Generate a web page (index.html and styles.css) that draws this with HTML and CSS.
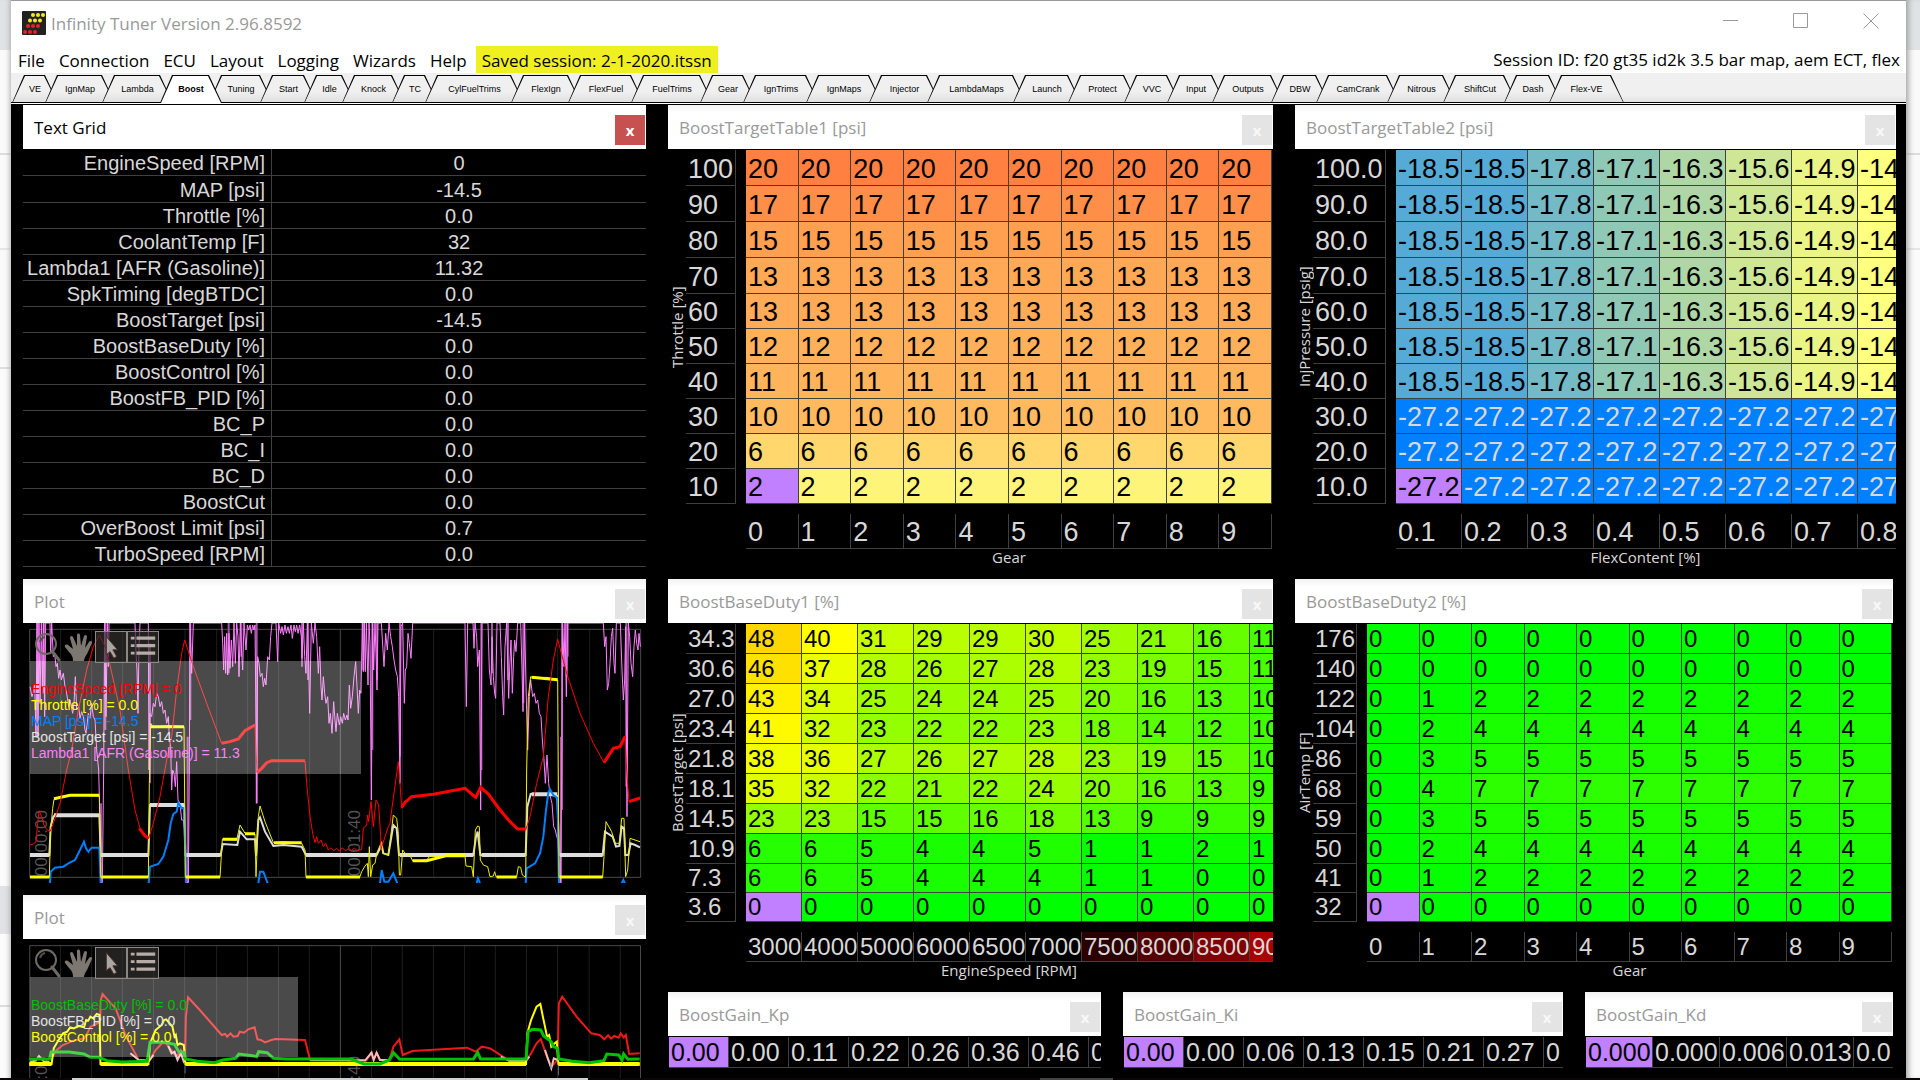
FILE: index.html
```html
<!DOCTYPE html>
<html lang="en">
<head>
<meta charset="utf-8">
<title>Infinity Tuner Version 2.96.8592</title>
<link rel="stylesheet" href="styles.css">
</head>
<body>
<svg class="symbols" aria-hidden="true">
  <symbol id="zoom" viewBox="0 0 32 32">
    <circle cx="15" cy="13" r="10" fill="none" stroke="#6f6a64" stroke-width="2"/>
    <path d="M9 11a7 7 0 0 1 5-5" fill="none" stroke="#55504b" stroke-width="2"/>
    <path d="M21 20l7 9" stroke="#6f6a64" stroke-width="3" stroke-linecap="round"/>
  </symbol>
  <symbol id="hand" viewBox="0 0 32 32">
    <path d="M10 30c0-4-1-6-4-9l-4-5c-1-2 1-3 3-2l5 4-3-11c0-2 2-3 3-1l4 9V4c0-2 3-2 3 0l1 11 3-10c1-2 3-1 3 1l-2 11 4-6c1-2 4-1 3 1l-5 11c-2 3-3 5-3 7z" fill="#7d7771"/>
  </symbol>
  <symbol id="arrow" viewBox="0 0 32 32">
    <path d="M11 5v19l4-3 4 7 3-2-4-7h5z" fill="#a9a6a6" stroke="#4a3020" stroke-width="1"/>
  </symbol>
  <symbol id="list" viewBox="0 0 32 32">
    <path d="M9 6.500h20M9 14.500h20M9 22.500h20" stroke="#b5aca5" stroke-width="3.500"/>
    <path d="M3 6.500h4M3 14.500h4M3 22.500h4" stroke="#b5aca5" stroke-width="3"/>
  </symbol>
</svg>

<div class="desktop">
  <div class="edge edge-left"></div>
  <div class="app">
    <header class="titlebar">
      <svg class="logo" viewBox="0 0 24 24" aria-hidden="true">
        <rect width="24" height="24" rx="1" fill="#222"/>
        <g fill="#f4ea1c"><circle cx="11" cy="4" r="2"/><circle cx="16" cy="4" r="2"/><circle cx="21" cy="4" r="2"/><circle cx="8" cy="9.500" r="2"/><circle cx="13" cy="9.500" r="2"/><circle cx="18" cy="9.500" r="2"/></g>
        <g fill="#e8202a"><circle cx="6" cy="15" r="2"/><circle cx="11" cy="15" r="2"/><circle cx="16" cy="15" r="2"/><circle cx="3" cy="21" r="2"/><circle cx="8" cy="21" r="2"/><circle cx="13" cy="21" r="2"/></g>
      </svg>
      <h1 class="app-name">Infinity Tuner Version 2.96.8592</h1>
      <div class="window-buttons">
        <button class="wb" aria-label="Minimize"><svg viewBox="0 0 16 16"><path d="M0 7.500h15"/></svg></button>
        <button class="wb" aria-label="Maximize"><svg viewBox="0 0 16 16"><path d="M.5.5h14v14H.5z"/></svg></button>
        <button class="wb" aria-label="Close"><svg viewBox="0 0 16 16"><path d="M.5.5l15 15M15.500.5l-15 15"/></svg></button>
      </div>
    </header>
    <nav class="menubar">
      <button class="menu">File</button>
      <button class="menu">Connection</button>
      <button class="menu">ECU</button>
      <button class="menu">Layout</button>
      <button class="menu">Logging</button>
      <button class="menu">Wizards</button>
      <button class="menu">Help</button>
      <span class="saved">Saved session: 2-1-2020.itssn</span>
      <span class="session">Session ID: f20 gt35 id2k 3.5 bar map, aem ECT, flex</span>
    </nav>
    <div class="tabs" role="tablist">
      <button class="tab" role="tab">VE</button>
      <button class="tab" role="tab">IgnMap</button>
      <button class="tab" role="tab">Lambda</button>
      <button class="tab active" role="tab" aria-selected="true">Boost</button>
      <button class="tab" role="tab">Tuning</button>
      <button class="tab" role="tab">Start</button>
      <button class="tab" role="tab">Idle</button>
      <button class="tab" role="tab">Knock</button>
      <button class="tab" role="tab">TC</button>
      <button class="tab" role="tab">CylFuelTrims</button>
      <button class="tab" role="tab">FlexIgn</button>
      <button class="tab" role="tab">FlexFuel</button>
      <button class="tab" role="tab">FuelTrims</button>
      <button class="tab" role="tab">Gear</button>
      <button class="tab" role="tab">IgnTrims</button>
      <button class="tab" role="tab">IgnMaps</button>
      <button class="tab" role="tab">Injector</button>
      <button class="tab" role="tab">LambdaMaps</button>
      <button class="tab" role="tab">Launch</button>
      <button class="tab" role="tab">Protect</button>
      <button class="tab" role="tab">VVC</button>
      <button class="tab" role="tab">Input</button>
      <button class="tab" role="tab">Outputs</button>
      <button class="tab" role="tab">DBW</button>
      <button class="tab" role="tab">CamCrank</button>
      <button class="tab" role="tab">Nitrous</button>
      <button class="tab" role="tab">ShiftCut</button>
      <button class="tab" role="tab">Dash</button>
      <button class="tab" role="tab">Flex-VE</button>
    </div>

    <main class="workspace">
      <div class="column">
        <section class="panel">
          <div class="panel-title current"><h2>Text Grid</h2><button class="close" aria-label="Close Text Grid">x</button></div>
          <table class="readout">
            <tr><th>EngineSpeed [RPM]</th><td>0</td></tr>
            <tr><th>MAP [psi]</th><td>-14.5</td></tr>
            <tr><th>Throttle [%]</th><td>0.0</td></tr>
            <tr><th>CoolantTemp [F]</th><td>32</td></tr>
            <tr><th>Lambda1 [AFR (Gasoline)]</th><td>11.32</td></tr>
            <tr><th>SpkTiming [degBTDC]</th><td>0.0</td></tr>
            <tr><th>BoostTarget [psi]</th><td>-14.5</td></tr>
            <tr><th>BoostBaseDuty [%]</th><td>0.0</td></tr>
            <tr><th>BoostControl [%]</th><td>0.0</td></tr>
            <tr><th>BoostFB_PID [%]</th><td>0.0</td></tr>
            <tr><th>BC_P</th><td>0.0</td></tr>
            <tr><th>BC_I</th><td>0.0</td></tr>
            <tr><th>BC_D</th><td>0.0</td></tr>
            <tr><th>BoostCut</th><td>0.0</td></tr>
            <tr><th>OverBoost Limit [psi]</th><td>0.7</td></tr>
            <tr><th>TurboSpeed [RPM]</th><td>0.0</td></tr>
          </table>
        </section>

        <section class="panel">
          <div class="panel-title"><h2>Plot</h2><button class="close" aria-label="Close plot">x</button></div>
          <div class="plot plot-large">
            <svg class="traces" viewBox="69 159 1869 780" preserveAspectRatio="none">
              <path class="grid" d="M182 178V922M275 178V922M368 178V922M461 178V922M555 178V922M650 178V922M743 178V922M836 178V922M929 178V922M1115 178V922M1208 178V922M1301 178V922M1394 178V922M1487 178V922M1580 178V922M1673 178V922M1769 178V922M1862 178V922"/>
              <path class="frame" d="M89 178H1922V922H89zM1021 178V922"/>
            </svg>
            <span class="time time-start">00:00:00</span>
            <span class="time time-mid">00:01:40</span>
            <svg class="traces" viewBox="69 159 1869 780" preserveAspectRatio="none">
              <path class="pink-soft" d="M113 159V420M132 159V370M316 159V480M450 220V640M571 159V450M686 159V310M724 159V260M770 159V700M906 159V290M924 159V330M1090 159V300M1117 159V540M1131 159V330M1200 159V560M1444 159V600M1476 159V310M1524 159V330M1570 159V400M1686 159V720M1700 159V320M1703 159V260M1879 159V650M303 700V938M563 500V938M1683 500V938"/>
              <polyline class="pink" points="90,350 96,380 104,345 108,500 111,159 114,500 117,159 120,400 124,159 127,350 130,159 134,440 137,159 150,159 152,250 155,159 160,260 164,250 168,290 172,280 176,325 180,300 184,330 190,310 195,350 200,370 206,410 210,390 218,430 222,400 226,320 230,420 236,410 240,445 245,425 250,440 255,480 258,490 265,430 270,445 275,400 280,440 285,450 290,540 296,600 300,760 303,938 307,938 311,600 314,159 318,440 322,159 325,290 327,159 405,159 408,250 411,300 414,430 417,230 420,159 445,159 447,600 449,430 455,440 460,400 465,410 470,370 475,380 480,410 485,395 490,430 495,420 500,460 505,440 508,500 512,530 515,660 518,600 522,610 526,650 530,575 534,690 540,700 545,750 550,750 555,790 560,938 565,938 568,600 570,159 575,310 580,159 665,159 668,220 671,300 674,200 677,310 680,190 683,315 687,190 690,295 694,210 698,290 702,159 706,280 710,159 714,200 717,320 721,159 725,250 728,300 732,159 735,200 738,240 742,165 746,180 750,165 754,190 758,165 762,180 765,165 768,450 770,700 773,260 777,280 781,320 786,310 790,350 794,325 798,345 803,260 808,270 812,200 816,159 828,159 833,275 836,159 842,190 846,170 850,195 855,165 859,190 864,170 868,190 873,165 877,205 882,165 886,185 890,165 894,190 899,165 904,200 906,265 910,159 914,260 918,310 922,159 926,280 929,430 934,159 940,220 945,159 950,200 955,310 959,230 963,350 966,390 970,320 974,370 978,400 983,380 987,460 991,430 996,490 1001,395 1005,450 1008,485 1012,430 1018,465 1022,440 1027,460 1031,430 1036,450 1041,435 1044,450 1048,345 1052,415 1057,380 1062,320 1067,275 1071,350 1075,430 1079,360 1083,370 1087,159 1090,305 1093,159 1096,305 1099,159 1104,345 1107,159 1110,220 1114,690 1118,159 1121,300 1125,159 1128,250 1131,360 1134,159 1144,159 1149,240 1152,290 1157,190 1162,240 1167,159 1172,200 1177,230 1182,270 1187,300 1192,320 1196,380 1200,640 1203,170 1208,159 1213,400 1216,300 1220,290 1224,190 1228,220 1233,265 1238,159 1395,159 1399,410 1403,159 1419,159 1422,235 1425,159 1430,200 1433,290 1438,240 1442,720 1446,159 1464,159 1468,300 1473,345 1476,200 1480,320 1484,370 1487,385 1491,159 1500,159 1504,260 1508,380 1511,435 1515,230 1520,159 1526,385 1530,270 1533,210 1537,370 1541,260 1544,210 1548,245 1553,159 1562,159 1566,300 1569,425 1574,159 1578,350 1583,540 1588,380 1592,330 1598,380 1603,370 1608,400 1613,390 1618,430 1623,440 1627,510 1632,570 1636,640 1641,555 1646,640 1651,680 1656,700 1661,770 1666,780 1670,800 1674,810 1681,938 1685,620 1688,159 1692,290 1695,159 1699,380 1703,159 1810,159 1814,230 1818,200 1822,360 1826,340 1830,280 1834,200 1838,175 1842,280 1845,310 1849,159 1861,159 1866,300 1870,390 1874,330 1877,170 1881,740 1885,159 1889,200 1893,280 1898,320 1902,230 1906,180 1910,220 1914,240 1917,190 1921,230"/>
              <polyline class="white" points="90,855 148,855 152,770 160,740 165,735 298,735 302,855 445,855 450,705 552,705 556,855 662,855 668,822 712,825 720,785 740,808 765,808 768,858 775,750 780,742 795,785 820,828 850,825 905,830 918,855 1130,855 1145,825 1150,850 1165,855 1180,765 1190,775 1197,855 1420,855 1428,800 1433,785 1441,855 1577,855 1582,710 1592,672 1640,672 1672,678 1677,855 1808,855 1815,785 1838,800 1848,830 1858,828 1865,770 1872,775 1876,855 1885,855 1892,820 1905,825 1920,832"/>
              <path class="white-bold" d="M90 855H148M162 736H298M302 855H445M450 705H552M558 855H662M918 855H1130M1200 855H1420M1445 855H1577M1595 673H1672M1680 855H1808"/>
              <path class="blue" d="M150 940L152 905L165 893L190 890L205 880L225 870L240 840L252 815L258 835L265 845L275 833H298L302 940M446 940L450 890L475 882L490 860L505 810L512 760L520 732L530 725L535 698L545 715H553L558 940M775 940L780 905H790L803 940M1140 940L1145 900L1153 935H1165L1180 910L1192 940M1430 940L1434 925L1440 940M1577 940L1580 895L1605 880L1620 850L1630 800L1638 720L1645 668L1650 658L1660 675L1673 685L1677 940M1865 940L1870 930L1875 940"/>
              <polyline class="yellow" points="90,922 148,922 152,780 158,715 162,688 185,682 210,675 298,678 302,922 445,922 448,640 452,460 460,472 500,467 552,470 556,922 660,922 667,808 710,810 720,765 735,790 765,792 768,920 775,740 780,708 795,755 820,818 850,815 905,820 915,840 918,922 1080,920 1085,905 1095,888 1102,880 1105,920 1108,830 1112,920 1118,885 1125,880 1130,850 1145,815 1148,850 1165,855 1172,800 1180,735 1190,745 1195,790 1198,915 1202,915 1208,840 1215,850 1228,852 1238,873 1280,870 1290,858 1320,862 1340,855 1395,855 1398,888 1415,890 1420,920 1426,780 1433,768 1438,770 1441,870 1450,885 1463,890 1470,920 1480,918 1484,905 1488,920 1550,920 1555,890 1562,892 1567,915 1577,922 1580,600 1585,380 1592,320 1600,324 1640,322 1673,330 1677,922 1808,922 1812,860 1818,755 1835,785 1845,820 1858,820 1865,745 1872,745 1877,920 1883,900 1890,805 1920,815"/>
              <path class="yellow-bold" d="M90 921H148M162 686L210 676H298M304 921H445M453 470H552M558 921H660M668 808H712M735 791H765M822 818H905M918 921H1080M1238 872H1280L1340 857H1395M1490 921H1550M1595 322L1673 329M1679 921H1808"/>
              <polyline class="red" points="90,825 100,822 108,815 113,760 117,722 125,740 132,765 140,778 150,785 160,760 180,700 200,600 215,540 235,420 260,300 280,230 298,195 320,240 340,330 360,420 385,600 405,720 420,775 435,798 446,805 460,760 480,680 500,570 515,500 530,360 545,250 554,210 580,290 620,400 665,520 690,515 715,507 735,482 765,465 768,540 771,608 785,595 800,578 815,572 915,573 920,640 930,740 938,790 945,818 950,800 955,820 963,810 970,830 977,820 985,840 993,833 1001,842 1010,835 1018,843 1027,833 1036,842 1045,836 1054,842 1063,834 1072,842 1085,838 1090,775 1100,765 1103,735 1106,755 1113,695 1120,770 1128,690 1136,705 1142,800 1143,838 1155,800 1165,770 1170,760 1175,720 1195,575 1200,640 1205,715 1215,695 1235,680 1300,673 1395,655 1410,665 1427,682 1442,650 1465,672 1500,720 1530,755 1553,777 1577,780 1590,740 1610,640 1630,560 1645,380 1660,270 1673,208 1700,310 1740,430 1780,520 1812,578 1840,535 1860,530 1875,498 1880,600 1887,695 1920,684"/>
              <path class="red-bold" d="M665 520L690 515L715 507L735 482L765 465M771 608L785 595L800 578L815 572H915M1205 712L1215 697L1235 680L1300 673L1395 655L1427 682L1442 652L1465 672L1500 720L1530 755L1553 777H1577M1812 578L1840 535L1860 530L1875 500M1887 695L1920 684M418 775L435 798L446 805"/>
            </svg>
            <ul class="legend">
              <li class="c-red">EngineSpeed [RPM] = 0</li>
              <li class="c-yellow">Throttle [%] = 0.0</li>
              <li class="c-blue">MAP [psi] = -14.5</li>
              <li class="c-white">BoostTarget [psi] = -14.5</li>
              <li class="c-pink">Lambda1 [AFR (Gasoline)] = 11.3</li>
            </ul>
            <div class="tools">
              <button class="tool" aria-label="Zoom"><svg><use href="#zoom"/></svg></button>
              <button class="tool" aria-label="Pan"><svg><use href="#hand"/></svg></button>
              <button class="tool on" aria-label="Select"><svg><use href="#arrow"/></svg></button>
              <button class="tool on" aria-label="Legend"><svg><use href="#list"/></svg></button>
            </div>
          </div>
        </section>

        <section class="panel">
          <div class="panel-title"><h2>Plot</h2><button class="close" aria-label="Close plot">x</button></div>
          <div class="plot plot-small">
            <svg class="traces" viewBox="55 147 1480 417" preserveAspectRatio="none">
              <path class="grid" d="M144 167V600M218 167V600M291 167V600M365 167V600M439 167V600M515 167V600M588 167V600M662 167V600M735 167V600M883 167V600M956 167V600M1030 167V600M1104 167V600M1177 167V600M1251 167V600M1325 167V600M1400 167V600M1474 167V600"/>
              <path class="frame" d="M71 600V167H1522V600M809 167V600"/>
            </svg>
            <span class="time time-start">00:00:00</span>
            <span class="time time-mid">00:01:40</span>
            <svg class="traces" viewBox="55 147 1480 417" preserveAspectRatio="none">
              <polyline class="red red-mid" points="120,510 135,480 150,465 175,452 200,445 208,430 215,410 225,405 238,395 240,330 244,312 260,335 275,355 300,440 330,510 355,512 370,480 385,460 395,460 410,485 420,500 430,480 438,495 440,500 442,380 447,322 475,360 527,435 535,432 540,440 548,430 555,440 565,438 570,425 580,428 590,418 605,412 612,448 620,450 630,457 645,450 655,447 725,450 737,510 838,512 870,512 883,488 888,510 895,488 903,510 925,510 935,470 949,448 957,495 980,483 1110,473 1130,485 1145,470 1165,475 1210,512 1250,512 1262,490 1275,460 1285,447 1300,500 1310,530 1325,510 1328,340 1336,320 1370,380 1405,430 1425,435 1436,448 1445,436 1452,446 1460,438 1470,443 1475,430 1482,442 1487,435 1495,492 1520,490"/>
              <path class="pale" d="M72 515L85 512L93 498L105 515H118M310 490L330 510L355 512L365 495M400 468L408 490L415 485L422 510L430 490L437 515L440 510M737 511H868L883 488L888 510L895 488L903 510H925L935 490M1190 500L1210 512H1250L1258 500M1295 480L1303 510L1310 535L1316 505L1325 510"/>
              <path class="spike" d="M440 515V550M1327 515V556M1309 520V535"/>
              <polyline class="yellow-bold" points="70,522 123,522 128,475 135,460 150,430 160,425 167,412 175,415 188,408 200,412 205,390 210,392 215,380 222,385 230,372 237,375 239,522 353,522 357,460 370,420 378,412 385,405 390,390 395,388 402,398 410,410 415,440 418,435 422,465 428,460 437,465 441,522 1250,522 1253,430 1262,390 1275,350 1284,342 1290,380 1300,440 1305,435 1310,470 1318,460 1323,455 1327,522 1520,522"/>
              <path class="yellow-base" d="M70 522H123M239 522H353M441 522H1250M1327 522H1520"/>
              <polyline class="green" points="70,507 118,507 122,486 165,486 200,492 215,502 235,502 255,512 290,516 350,514 357,457 390,457 415,463 425,485 438,487 441,507 470,514 510,518 530,510 560,505 568,492 600,497 610,500 615,485 635,488 650,505 680,507 835,507 850,515 865,522 903,522 925,510 935,488 950,508 1125,507 1135,488 1142,507 1250,507 1255,425 1265,418 1285,420 1292,438 1310,455 1315,470 1325,475 1328,507 1360,514 1400,518 1435,512 1442,492 1470,495 1478,510 1482,492 1492,508 1520,507"/>
            </svg>
            <ul class="legend legend-narrow">
              <li class="c-green">BoostBaseDuty [%] = 0.0</li>
              <li class="c-white">BoostFB_PID [%] = 0.0</li>
              <li class="c-yellow">BoostControl [%] = 0.0</li>
            </ul>
            <div class="tools">
              <button class="tool" aria-label="Zoom"><svg><use href="#zoom"/></svg></button>
              <button class="tool" aria-label="Pan"><svg><use href="#hand"/></svg></button>
              <button class="tool on" aria-label="Select"><svg><use href="#arrow"/></svg></button>
              <button class="tool on" aria-label="Legend"><svg><use href="#list"/></svg></button>
            </div>
          </div>
        </section>
      </div>

      <div class="column">
        <div class="maps">
          <section class="panel">
            <div class="panel-title"><h2>BoostTargetTable1 [psi]</h2><button class="close" aria-label="Close BoostTargetTable1">x</button></div>
            <div class="map">
              <span class="y-name">Throttle [%]</span>
              <table class="cells tall" id="target1"></table>
              <span class="x-name">Gear</span>
            </div>
          </section>
          <section class="panel">
            <div class="panel-title"><h2>BoostTargetTable2 [psi]</h2><button class="close" aria-label="Close BoostTargetTable2">x</button></div>
            <div class="map">
              <span class="y-name">InjPressure [psig]</span>
              <table class="cells tall wide-axis" id="target2"></table>
              <span class="x-name">FlexContent [%]</span>
            </div>
          </section>
          <section class="panel">
            <div class="panel-title"><h2>BoostBaseDuty1 [%]</h2><button class="close" aria-label="Close BoostBaseDuty1">x</button></div>
            <div class="map">
              <span class="y-name">BoostTarget [psi]</span>
              <table class="cells" id="duty1"></table>
              <span class="x-name">EngineSpeed [RPM]</span>
            </div>
          </section>
          <section class="panel panel-inset">
            <div class="panel-title"><h2>BoostBaseDuty2 [%]</h2><button class="close" aria-label="Close BoostBaseDuty2">x</button></div>
            <div class="map">
              <span class="y-name">AirTemp [F]</span>
              <table class="cells narrow-axis" id="duty2"></table>
              <span class="x-name">Gear</span>
            </div>
          </section>
        </div>
        <div class="gains">
          <section class="panel">
            <div class="panel-title"><h2>BoostGain_Kp</h2><button class="close" aria-label="Close BoostGain_Kp">x</button></div>
            <div class="strip"><table class="gain"><tr><td class="sel">0.00</td><td>0.00</td><td>0.11</td><td>0.22</td><td>0.26</td><td>0.36</td><td>0.46</td><td>0</td></tr></table></div>
          </section>
          <section class="panel">
            <div class="panel-title"><h2>BoostGain_Ki</h2><button class="close" aria-label="Close BoostGain_Ki">x</button></div>
            <div class="strip"><table class="gain"><tr><td class="sel">0.00</td><td>0.00</td><td>0.06</td><td>0.13</td><td>0.15</td><td>0.21</td><td>0.27</td><td>0</td></tr></table></div>
          </section>
          <section class="panel">
            <div class="panel-title"><h2>BoostGain_Kd</h2><button class="close" aria-label="Close BoostGain_Kd">x</button></div>
            <div class="strip"><table class="gain gain-wide"><tr><td class="sel">0.000</td><td>0.000</td><td>0.006</td><td>0.013</td><td>0.0</td></tr></table></div>
          </section>
        </div>
      </div>
    </main>
  </div>
  <div class="edge edge-right"></div>
  <div class="taskbar"><span class="task-light"></span><span class="task-gray"></span></div>
</div>
<script src="app.js"></script>
</body>
</html>
```

FILE: styles.css
```css
* { box-sizing: border-box; }
body { margin: 0; background: #fafafa; font-family: "Liberation Sans", Arial, sans-serif; color: #000; }
button { margin: 0; padding: 0; border: 0; background: none; color: inherit; font: inherit; }
h1, h2, ul { margin: 0; padding: 0; font-weight: 400; list-style: none; }
.symbols { position: absolute; width: 0; height: 0; }

.desktop { display: grid; grid-template-columns: 11px minmax(0, 1fr) 14px; grid-template-rows: 1fr 2px; min-height: 100vh; overflow: hidden; }
.edge { background: linear-gradient(#dfe3e6 50px, #fafafa 50px 153px, #dcdcdc 153px 155px, #fafafa 155px 248px, #e6e6e6 248px 250px, #fbfbfb 250px); }
.edge-left { background: linear-gradient(#dfe3e6 50px, #fafafa 50px 153px, #dcdcdc 153px 155px, #fafafa 155px 248px, #e6e6e6 248px 250px, #fafafa 250px 367px, #dedede 367px 369px, #fbfbfb 369px 886px, #e0e2e6 886px 934px, #fbfbfb 934px 1005px, #dcdcdc 1005px 1007px, #fbfbfb 1007px); }
.edge-right { box-shadow: inset 6px 0 6px -4px #999; }
.edge-left { box-shadow: inset -5px 0 5px -4px #aaa; }
.taskbar { grid-column: 1 / -1; display: grid; grid-template-columns: 72px 516px 452px 73px; background: #0a0508; }
.task-light { grid-column: 2; background: #cfcfcf; }
.task-gray { grid-column: 4; background: #444; }

.app { display: flex; flex-direction: column; background: #000; border-top: 1px solid #999; overflow: hidden; }
.titlebar { display: flex; align-items: center; height: 45px; padding: 0 0 2px 11px; background: #fff; color: #999; }
.logo { width: 24px; height: 24px; }
.app-name { flex: 1; padding: 2px 0 0 5px; font: 17px/24px "Open Sans", "Noto Sans", sans-serif; }
.window-buttons { display: flex; }
.wb { width: 70px; height: 24px; }
.wb svg { width: 16px; height: 16px; fill: none; stroke: #999; stroke-width: 1; }

.menubar { display: flex; align-items: center; height: 27px; padding-right: 6px; background: #fff; font: 17px/27px "Open Sans", "Noto Sans", sans-serif; }
.menu { padding: 1px 7px 0; }
.saved { height: 27px; padding: 1px 6px 0; margin-left: 2px; background: #f0f020; }
.session { margin-left: auto; }

.tabs {
  display: grid;
  grid-template-columns: 33px 57px 58px 49px 51px 44px 38px 50px 33px 86px 57px 63px 69px 43px 63px 63px 58px 86px 55px 56px 43px 45px 59px 45px 71px 56px 61px 45px 62px;
  height: 31px; padding: 2px 0 0 1px;
  background: linear-gradient(#f0f0f0 22px, #e2e2e2 29px, #000 29px 30px, #fff 30px);
}
.tab {
  position: relative; z-index: 0; width: calc(100% + 13px); height: 28px;
  background: #000; clip-path: polygon(0 100%, 12px 0, calc(100% - 13px) 0, 100% 100%);
  font-size: 9px; line-height: 27px; text-align: center; white-space: nowrap;
}
.tab::before {
  content: ""; position: absolute; z-index: -1; inset: 1px 1px 1px 1px;
  background: linear-gradient(#f0f0f0 60%, #e0e0e0); clip-path: polygon(0 100%, 12px 0, calc(100% - 13px) 0, 100% 100%);
}
.tab.active { z-index: 1; font-weight: 700; }
.tab.active::before { bottom: 0; background: #fff; }

.workspace { display: grid; grid-template-columns: minmax(0, 623fr) minmax(0, 1228fr); gap: 22px; padding: 1px 10px 0 12px; }
.column { display: flex; flex-direction: column; gap: 12px; min-width: 0; }
.maps { display: grid; grid-template-columns: minmax(0, 605fr) minmax(0, 601fr); gap: 12px 22px; }
.gains { display: grid; grid-template-columns: minmax(0, 433fr) minmax(0, 440fr) minmax(0, 308fr); gap: 22px; padding-right: 3px; }

.panel { min-width: 0; overflow: hidden; }
.panel-inset { margin-right: 3px; }
.panel-title { display: flex; align-items: center; justify-content: space-between; height: 44px; padding: 0 1px 0 11px; background: linear-gradient(#f2f2f2, #fff 8px); color: #999; font: 17px/24px "Open Sans", "Noto Sans", sans-serif; }
.panel-title h2 { padding-top: 2px; font: inherit; }
.close { width: 30px; height: 30px; margin-top: 6px; background: #e4e4e4; color: #f8f8f8; font: bold 15px/28px "Open Sans", sans-serif; }
.current { background: #fff; color: #000; }
.current .close { background: #c75050; color: #fff; }

.readout { width: 100%; border-spacing: 0; table-layout: fixed; color: #d8d8d8; font-size: 20px; line-height: 23px; }
.readout th, .readout td { height: 26px; padding: 2px 0 0; border-bottom: 1px solid #404040; font-weight: 400; white-space: nowrap; }
.readout th { width: 249px; padding-right: 6px; border-right: 1px solid #404040; text-align: right; }
.readout td { text-align: center; }
.readout tr:nth-child(-n+2) > * { height: 27px; }

.plot { position: relative; overflow: hidden; background: #000; }
.plot-large { height: 260px; }
.plot-small { height: 139px; }
.traces { position: absolute; inset: 0; width: 100%; height: 100%; fill: none; }
.traces * { vector-effect: non-scaling-stroke; }
.grid { stroke: #1e1e1e; }
.frame { stroke: #4a4a4a; }
.red { stroke: #f00; }
.red-mid { stroke-width: 2; stroke: #f01818; }
.red-bold { stroke: #f00; stroke-width: 3; }
.yellow { stroke: #ee0; stroke-width: 1; }
.yellow-bold { stroke: #ff0; stroke-width: 3; }
.yellow-base { stroke: #ff0; stroke-width: 4; }
.plot-small .yellow-bold { stroke-width: 2; }
.white { stroke: #ddd; stroke-width: 2; }
.white-bold { stroke: #ddd; stroke-width: 4; }
.blue { stroke: #0080ff; stroke-width: 2; }
.pink { stroke: #ff80ff; }
.pink-soft { stroke: #a855a8; stroke-width: 2; }
.green { stroke: #00c000; stroke-width: 3; }
.pale { stroke: #f0c0c0; stroke-width: 2; }
.spike { stroke: #507090; }
.time { position: absolute; bottom: 7px; color: #555; font-size: 17px; line-height: 16px; writing-mode: vertical-rl; transform: rotate(180deg); }
.plot-small .time { bottom: -44px; }
.time-start { left: 11px; }
.time-mid { left: 52%; }
.legend { position: absolute; left: 7px; top: 38px; width: 331px; height: 113px; padding: 20px 0 0 1px; background: rgba(255, 255, 255, .29); font-size: 14px; line-height: 16px; }
.legend-narrow { width: 268px; height: 80px; }
.c-red { color: #f00; }
.c-yellow { color: #ff0; }
.c-blue { color: #0080ff; }
.c-white { color: #e4e4e4; }
.c-pink { color: #ff80ff; }
.c-green { color: #00c000; }
.tools { position: absolute; left: 8px; top: 8px; display: flex; }
.tool { width: 32px; height: 32px; }
.tool svg { display: block; width: 100%; height: 100%; }
.tool.on { border: 1px solid #8c8782; background: rgba(50, 46, 46, .7); }

.map { display: grid; grid-template-columns: 18px minmax(0, 1fr); padding: 1px 1px 0 0; color: #d8d8d8; overflow: hidden; }
.y-name { height: 298px; padding-right: 1px; font: 15px/17px "Open Sans", "Noto Sans", sans-serif; text-align: center; writing-mode: vertical-rl; transform: rotate(180deg); white-space: nowrap; }
.x-name { grid-column: 2; height: 18px; padding-left: 60px; font: 15px/17px "Open Sans", "Noto Sans", sans-serif; text-align: center; }
.map:has(.tall) .y-name { height: 354px; }
.map:has(.wide-axis) .x-name { padding-left: 83px; }
.map:has(.narrow-axis) .x-name { padding-left: 54px; }
.cells { width: 100%; border-spacing: 0; table-layout: fixed; font-size: 24px; line-height: 28px; }
.cells.tall { font-size: 27px; line-height: 32px; }
.cells th, .cells td { height: 30px; padding: 0 0 0 2px; border: solid #404040; border-width: 0 1px 1px 0; font-weight: 400; text-align: left; white-space: nowrap; overflow: hidden; }
.cells td { color: #000; }
.cells tbody tr:nth-child(n+9) > * { height: 29px; }
.cells.tall th, .cells.tall td { padding-top: 2px; }
.cells.tall tbody tr > * { height: 35px; }
.cells.tall tbody tr:nth-child(-n+4) > * { height: 36px; }
.cells tfoot th { height: 29px; }
.cells.tall tfoot th { height: 35px; }
.cells .gap, .cells tfoot .space { border: 0; padding: 0; }
.cells tfoot .space { height: 10px; padding: 0; line-height: 0; }
.axis-col { width: 50px; }
.gap-col { width: 10px; }
.wide-axis .axis-col { width: 73px; }
.narrow-axis .axis-col { width: 44px; }
.cells .low { color: #d8d8d8; }
.cells .sel, .gain .sel { background: #c080ff; color: #000; }

.strip { padding: 1px 1px 0; overflow: hidden; }
.gain { width: 480px; border-spacing: 0; table-layout: fixed; color: #d8d8d8; font-size: 25px; line-height: 30px; }
.gain td { height: 31px; padding: 0 0 0 2px; border: solid #404040; border-width: 0 1px 1px 0; white-space: nowrap; }
.gain-wide { width: 335px; }
```

FILE: app.js
```js
// Fuel and boost maps: axes, values and the colour of each cell.
const repeat = (n, v) => Array(n).fill(v);
const duty = v => v <= 40
  ? `rgb(${Math.round(v * 6.375)}, 255, 0)`
  : `rgb(255, ${255 - (v - 40) * 5}, 0)`;
const gears = ["0", "1", "2", "3", "4", "5", "6", "7", "8", "9"];

function buildMap(id, { y, x, rows, color, xColor, colWidth }) {
  const table = document.getElementById(id);
  const cols = x.map(() => `<col${colWidth ? ` style="width:${colWidth}px"` : ""}>`).join("");
  const body = rows.map((row, r) => "<tr>" + `<th>${y[r]}</th><td class="gap"></td>` + row.map((v, c) => {
    if (r === rows.length - 1 && c === 0) return `<td class="sel">${v}</td>`;
    const low = v === "-27.2" ? ' class="low"' : "";
    return `<td${low} style="background:${color(v, r, c)}">${v}</td>`;
  }).join("") + "</tr>").join("");
  const foot = x.map((v, c) => `<th${xColor && xColor[c] ? ` style="background:${xColor[c]}"` : ""}>${v}</th>`).join("");
  table.innerHTML = `<colgroup><col class="axis-col"><col class="gap-col">${cols}</colgroup>` +
    `<tbody>${body}</tbody><tfoot><tr><td class="space" colspan="${x.length + 2}"></td></tr>` +
    `<tr><td class="gap"></td><td class="gap"></td>${foot}</tr></tfoot>`;
  if (colWidth) {
    const axis = table.classList.contains("wide-axis") ? 73 : 50;
    table.style.width = axis + 10 + colWidth * x.length + "px";
  }
}

const orange = ["#ff8040", "#ff8f48", "#ff9f50", "#ffa856", "#ffab57", "#ffb05a", "#ffb45c", "#ffb95f", "#ffd76c", "#fff47a"];
buildMap("target1", {
  y: [100, 90, 80, 70, 60, 50, 40, 30, 20, 10], x: gears,
  rows: [20, 17, 15, 13, 13, 12, 11, 10, 6, 2].map(v => repeat(10, v)),
  color: (v, r) => orange[r],
});

const cool = ["#55aad6", "#55aad6", "#73b9c6", "#90c8b6", "#aed7a5", "#cde796", "#ebf586", "#ffff80"];
buildMap("target2", {
  y: ["100.0", "90.0", "80.0", "70.0", "60.0", "50.0", "40.0", "30.0", "20.0", "10.0"],
  x: ["0.1", "0.2", "0.3", "0.4", "0.5", "0.6", "0.7", "0.8"],
  rows: [
    ...repeat(7, ["-18.5", "-18.5", "-17.8", "-17.1", "-16.3", "-15.6", "-14.9", "-14.1"]),
    ...repeat(3, repeat(8, "-27.2")),
  ],
  color: (v, r, c) => v === "-27.2" ? "#0080ff" : cool[c],
  colWidth: 66,
});

buildMap("duty1", {
  y: ["34.3", "30.6", "27.0", "23.4", "21.8", "18.1", "14.5", "10.9", "7.3", "3.6"],
  x: [3000, 4000, 5000, 6000, 6500, 7000, 7500, 8000, 8500, 9000],
  rows: [
    [48, 40, 31, 29, 29, 30, 25, 21, 16, 11],
    [46, 37, 28, 26, 27, 28, 23, 19, 15, 11],
    [43, 34, 25, 24, 24, 25, 20, 16, 13, 10],
    [41, 32, 23, 22, 22, 23, 18, 14, 12, 10],
    [38, 36, 27, 26, 27, 28, 23, 19, 15, 10],
    [35, 32, 22, 21, 22, 24, 20, 16, 13, 9],
    [23, 23, 15, 15, 16, 18, 13, 9, 9, 9],
    [6, 6, 5, 4, 4, 5, 1, 1, 2, 1],
    [6, 6, 5, 4, 4, 4, 1, 1, 0, 0],
    repeat(10, 0),
  ],
  color: duty,
  xColor: { 6: "#2b0000", 7: "#550000", 8: "#800000", 9: "#aa0000" },
  colWidth: 56,
});

buildMap("duty2", {
  y: [176, 140, 122, 104, 86, 68, 59, 50, 41, 32], x: gears,
  rows: [[0, 0], [0, 0], [1, 2], [2, 4], [3, 5], [4, 7], [3, 5], [2, 4], [1, 2], [0, 0]]
    .map(([a, b]) => [0, a, ...repeat(8, b)]),
  color: duty,
});
```
